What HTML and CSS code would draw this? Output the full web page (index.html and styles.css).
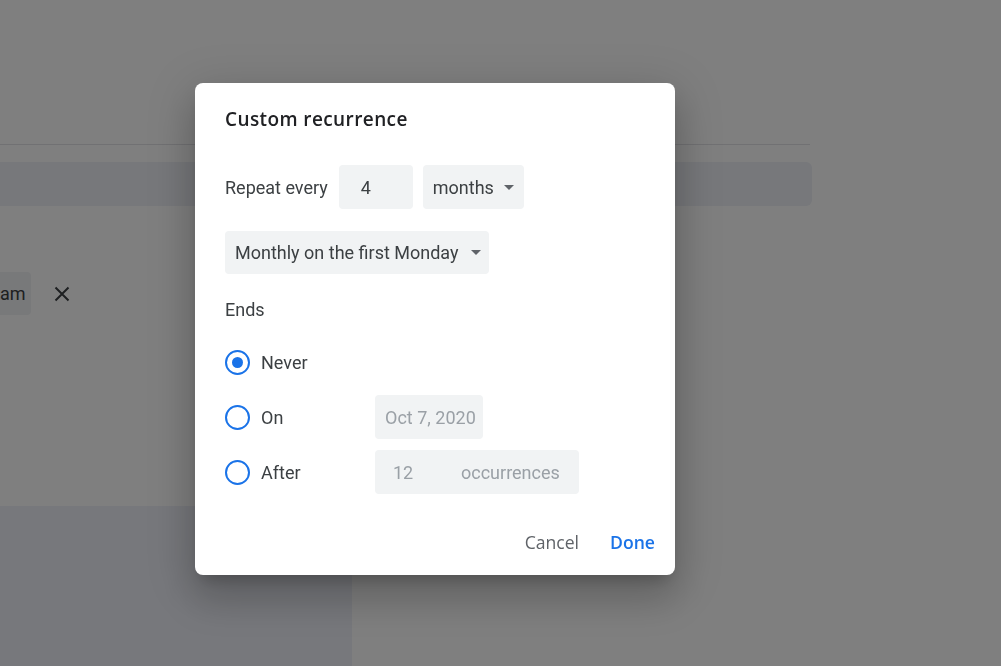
FILE: index.html
```html
<!DOCTYPE html>
<html lang="en">
<head>
<meta charset="utf-8">
<title>Custom recurrence</title>
<link rel="stylesheet" href="styles.css">
</head>
<body>
<div class="page">
  <div class="page-top"></div>
  <div class="page-bar"></div>
  <div class="chip-row">
    <span class="chip">am</span>
    <svg class="chip-close" width="16" height="16" viewBox="0 0 16 16" aria-hidden="true">
      <path d="M1.5 1.5 L14.5 14.5 M14.5 1.5 L1.5 14.5" stroke="#3c4043" stroke-width="2" fill="none"/>
    </svg>
  </div>
  <div class="page-panel"></div>
</div>
<div class="scrim"></div>
<div class="dialog" role="dialog">
  <h2 class="dialog-title">Custom recurrence</h2>
  <div class="repeat-row">
    <span class="label">Repeat every</span>
    <div class="field field-num">4</div>
    <div class="field field-select field-unit"><span>months</span><span class="caret"></span></div>
  </div>
  <div class="field field-select field-monthly"><span>Monthly on the first Monday</span><span class="caret"></span></div>
  <div class="ends-label">Ends</div>
  <div class="options">
    <div class="option">
      <span class="radio radio-checked"></span>
      <span class="option-label">Never</span>
    </div>
    <div class="option">
      <span class="radio"></span>
      <span class="option-label">On</span>
      <div class="field field-disabled field-date">Oct 7, 2020</div>
    </div>
    <div class="option">
      <span class="radio"></span>
      <span class="option-label">After</span>
      <div class="field field-disabled field-count"><span class="count-num">12</span><span>occurrences</span></div>
    </div>
  </div>
  <div class="actions">
    <button class="btn">Cancel</button>
    <button class="btn btn-primary">Done</button>
  </div>
</div>
</body>
</html>
```

FILE: styles.css
```css
* { box-sizing: border-box; }

html, body {
  margin: 0;
  padding: 0;
  background: #ffffff;
  font-family: Roboto, "Liberation Sans", sans-serif;
  color: #3c4043;
  overflow: hidden;
}

.page {
  width: 1001px;
  height: 666px;
  display: flex;
  flex-direction: column;
}

.page-top {
  width: 810px;
  height: 145px;
  border-bottom: 1px solid #e2e3e6;
}

.page-bar {
  width: 812px;
  height: 44px;
  margin-top: 17px;
  background: #eef0f6;
  border-radius: 0 6px 6px 0;
}

.chip-row {
  display: flex;
  align-items: center;
  gap: 23px;
  margin-top: 66px;
  height: 43px;
}

.chip {
  height: 43px;
  display: flex;
  align-items: center;
  padding: 0 5px 0 0;
  background: #f1f3f4;
  border-radius: 0 4px 4px 0;
  font-size: 18px;
  color: #3c4043;
}

.chip-close { flex: none; }

.page-panel {
  width: 352px;
  height: 160px;
  margin-top: 191px;
  background: #eef0f8;
}

.scrim {
  position: fixed;
  inset: 0;
  background: rgba(0, 0, 0, 0.5);
}

.dialog {
  position: absolute;
  left: 195px;
  top: 83px;
  width: 480px;
  height: 492px;
  background: #ffffff;
  border-radius: 8px;
  padding: 24px 12px 0 30px;
  display: flex;
  flex-direction: column;
  box-shadow: 0 24px 38px 3px rgba(0,0,0,.14), 0 9px 46px 8px rgba(0,0,0,.12), 0 11px 15px -7px rgba(0,0,0,.2);
}

.dialog-title {
  margin: 0;
  font-family: "Open Sans", Lato, sans-serif;
  font-weight: 600;
  font-size: 19px;
  letter-spacing: 0.4px;
  line-height: 24px;
  color: #202124;
}

.repeat-row {
  display: flex;
  align-items: center;
  margin-top: 34px;
  height: 44px;
}

.label,
.ends-label,
.option-label {
  font-size: 18px;
  color: #3c4043;
}

.field {
  height: 44px;
  background: #f1f3f4;
  border-radius: 4px;
  display: flex;
  align-items: center;
  font-size: 18px;
  color: #3c4043;
}

.field-num {
  width: 74px;
  margin-left: 11px;
  padding-left: 22px;
}

.field-select {
  justify-content: space-between;
}

.field-unit {
  width: 101px;
  margin-left: 10px;
  padding: 0 10px;
}

.field-monthly {
  align-self: flex-start;
  margin-top: 22px;
  height: 43px;
  padding: 0 8px 0 10px;
  gap: 12px;
}

.caret {
  width: 0;
  height: 0;
  border-left: 5px solid transparent;
  border-right: 5px solid transparent;
  border-top: 5px solid #5f6368;
}

.ends-label {
  margin-top: 24px;
  line-height: 24px;
}

.options {
  margin-top: 18px;
  display: flex;
  flex-direction: column;
  gap: 11px;
}

.option {
  display: grid;
  grid-template-columns: 25px 103px auto;
  column-gap: 11px;
  align-items: center;
  height: 44px;
}

.radio {
  width: 25px;
  height: 25px;
  border: 2.5px solid #1a73e8;
  border-radius: 50%;
  display: flex;
  align-items: center;
  justify-content: center;
}

.radio-checked::after {
  content: "";
  width: 11px;
  height: 11px;
  border-radius: 50%;
  background: #1a73e8;
}

.field-disabled {
  color: #9aa0a6;
}

.field-date {
  width: 108px;
  padding-left: 10px;
}

.field-count {
  width: 204px;
  padding-left: 18px;
}

.count-num {
  width: 68px;
}

.actions {
  margin-top: 30px;
  display: flex;
  justify-content: flex-end;
  gap: 15px;
}

.btn {
  height: 36px;
  padding: 0 8px;
  border: none;
  background: transparent;
  border-radius: 4px;
  font-family: "Open Sans", Lato, sans-serif;
  font-weight: 500;
  font-size: 17.6px;
  color: #5f6368;
  cursor: pointer;
}

.btn-primary {
  color: #1a73e8;
  font-weight: 600;
}
```
